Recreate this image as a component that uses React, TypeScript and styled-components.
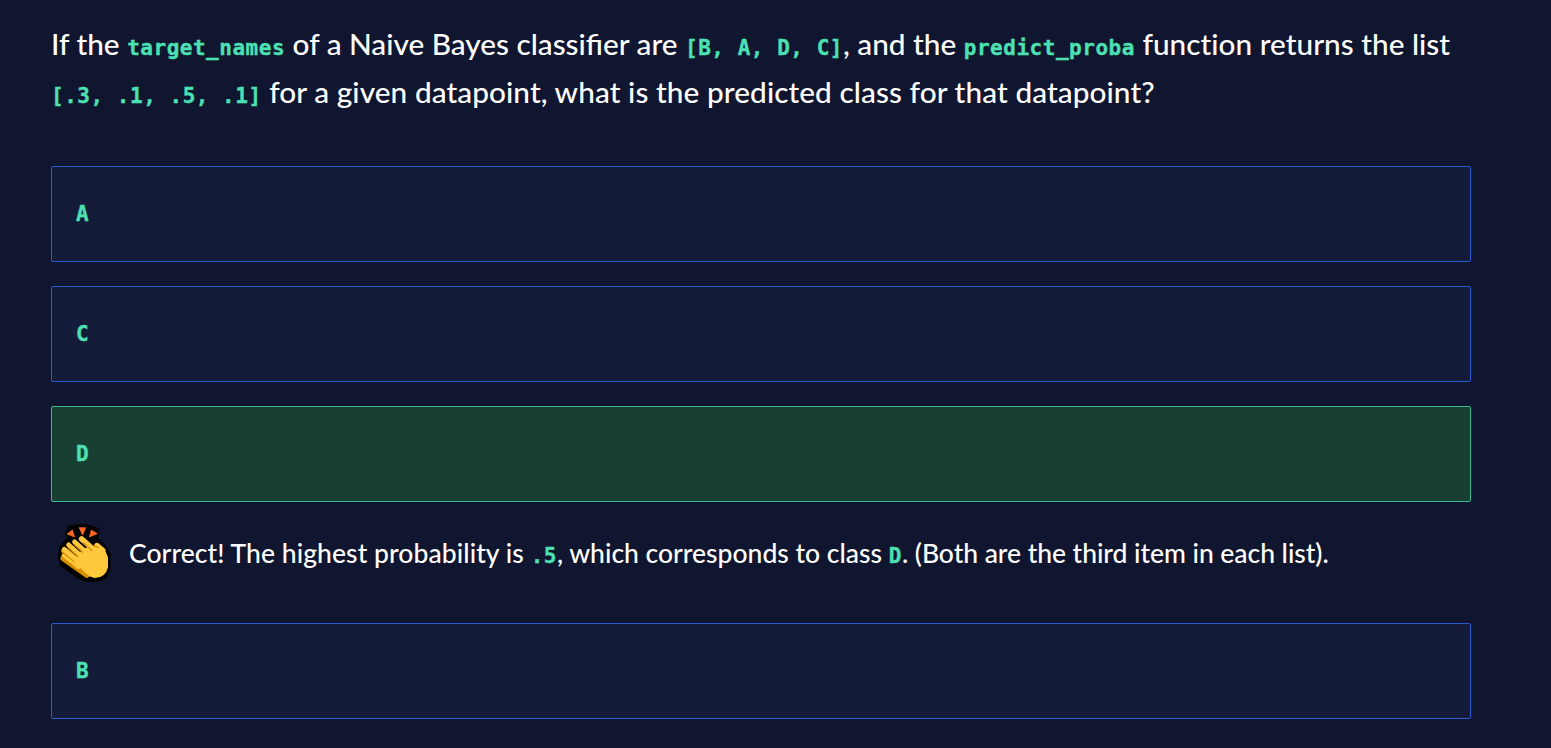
import React from 'react';
import styled, { createGlobalStyle } from 'styled-components';

const Global = createGlobalStyle`
  *, *::before, *::after { box-sizing: border-box; }
  body {
    margin: 0;
    background: #10162f;
    color: #fff;
    font-family: Lato, "Liberation Sans", sans-serif;
  }
`;

const Page = styled.main`
  min-height: 748px;
  padding: 20px 80px 29px 51px;
`;

const Question = styled.h1`
  margin: 0 0 50px;
  font-size: 29.75px;
  font-weight: 500;
  line-height: 48px;
  white-space: nowrap;
`;

const Line = styled.span`
  display: block;
`;

const Code = styled.code`
  font-family: "DejaVu Sans Mono", monospace;
  font-size: 21px;
  font-weight: 700;
  letter-spacing: 0.52px;
  line-height: 1;
  color: #4ce0b3;
  -webkit-text-stroke: 0.35px #4ce0b3;
`;

const Plain = styled.span<{ $track?: number }>`
  font-variant-ligatures: none;
  letter-spacing: ${p => p.$track ?? 0}px;
`;

const Options = styled.div`
  display: flex;
  flex-direction: column;
  gap: 24px;
`;

const Option = styled.button<{ $correct?: boolean }>`
  display: flex;
  align-items: center;
  width: 100%;
  height: 96px;
  padding: 0 24px;
  border: 1px solid ${p => (p.$correct ? '#3bb88f' : '#2c5ad0')};
  border-radius: 2px;
  background: ${p => (p.$correct ? '#184032' : '#151c39')};
`;

const Feedback = styled.div`
  display: flex;
  align-items: center;
  height: 73px;
  margin: -4px 0 4px;
  padding: 0 0 12px 6px;
  gap: 18px;
  font-size: 26.5px;
  font-weight: 500;
  line-height: 40px;
  white-space: nowrap;
`;

const Clap = () => (
  <svg width="54" height="59" viewBox="15 16 162 177" aria-hidden="true">
    <path
      d="M54 31 L78 27 H104 L132 36 L136 48 L126 64 L150 80 L168 108 V154 L156 178 L130 186 H104 L78 174 L30 138 L25 119 L28 90 L44 72 L60 63 L47 48 Z"
      fill="#000"
      stroke="#000"
      strokeWidth="15"
      strokeLinejoin="round"
    />
    <g stroke="#d99000" strokeWidth="17" strokeLinecap="round">
      <path d="M36 100 L80 136" />
      <path d="M34 122 L104 172" />
      <path d="M50 122 L112 168" />
    </g>
    <g stroke="#ffc83d" strokeLinecap="round">
      <path strokeWidth="15" d="M37 95 L90 140" />
      <path strokeWidth="15" d="M50 82 L104 130" />
      <path strokeWidth="15" d="M68 73 L120 120" />
      <path strokeWidth="17" d="M89 64 L136 106" />
      <path strokeWidth="9" d="M33 113 L80 150" />
      <path strokeWidth="17" d="M135 84 L152 98" />
    </g>
    <path d="M76 108 L112 84 L150 90 Q168 106 168 126 V148 Q161 181 128 181 Q112 178 98 164 L66 132 Z" fill="#ffc83d" />
    <g stroke="#d99000" strokeWidth="4" strokeLinecap="round" fill="none">
      <path d="M50 91 L78 117" />
      <path d="M68 82 L92 104" />
      <path d="M95 76 L120 99" />
      <path d="M126 85 L138 88" />
    </g>
    <g fill="#ff6723" stroke="#ff6723" strokeWidth="2" strokeLinejoin="round">
      <path d="M45 49 L61 37 L68 58 Z" />
      <path d="M81 30 H101 L92 52 Z" />
      <path d="M118 37 L136 48 L112 58 Z" />
    </g>
  </svg>
);

export default function App() {
  return (
    <>
      <Global />
      <Page>
        <Question>
          <Line>
            If the <Code>target_names</Code> of a Naive Bayes classifier are <Code>[B, A, D, C]</Code>, and the{' '}
            <Code>predict_proba</Code> <Plain $track={0.02}>function returns the list</Plain>
          </Line>
          <Line>
            <Code>[.3, .1, .5, .1]</Code>{' '}
            <Plain $track={0.08}>for a given datapoint, what is the predicted class for that datapoint?</Plain>
          </Line>
        </Question>
        <Options>
          <Option><Code>A</Code></Option>
          <Option><Code>C</Code></Option>
          <Option $correct><Code>D</Code></Option>
          <Feedback>
            <Clap />
            <span>
              <Plain $track={0.07}>Correct! The highest probability is </Plain>
              <Code>.5</Code>, which corresponds to class <Code>D</Code>
              <Plain $track={-0.04}>. (Both are the third item in each list).</Plain>
            </span>
          </Feedback>
          <Option><Code>B</Code></Option>
        </Options>
      </Page>
    </>
  );
}
